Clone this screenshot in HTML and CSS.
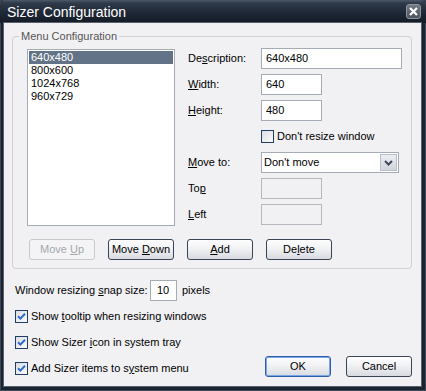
FILE: index.html
```html
<!DOCTYPE html>
<html lang="en">
<head>
    <meta charset="UTF-8">
    <title>Sizer Configuration</title>
    <link rel="stylesheet" href="styles.css">
</head>
<body>
<div class="window">
    <div class="titlebar">
        <span class="title">Sizer Configuration</span>
        <span class="close">
            <svg width="9" height="9" viewBox="0 0 9 9"><path d="M1 1L8 8M8 1L1 8" stroke="#fff" stroke-width="2.2"/></svg>
        </span>
    </div>
    <div class="client">
        <fieldset class="group">
            <legend>Menu Configuration</legend>
            <div class="groupBody">
                <ul class="listbox">
                    <li class="selected">640x480</li>
                    <li>800x600</li>
                    <li>1024x768</li>
                    <li>960x729</li>
                </ul>
                <div class="form">
                    <span>De<u>s</u>cription:</span>
                    <span class="edit wide">640x480</span>
                    <span><u>W</u>idth:</span>
                    <span class="edit">640</span>
                    <span><u>H</u>eight:</span>
                    <span class="edit">480</span>
                    <span></span>
                    <span class="check"><span class="box"></span><span>Don't resize window</span></span>
                    <span><u>M</u>ove to:</span>
                    <span class="combo">
                        <span class="comboText">Don't move</span>
                        <span class="comboArrow">
                            <svg width="9" height="6" viewBox="0 0 9 6"><path d="M1 1L4.5 4.5L8 1" fill="none" stroke="#3e4a5c" stroke-width="2"/></svg>
                        </span>
                    </span>
                    <span>To<u>p</u></span>
                    <span class="edit disabled"></span>
                    <span><u>L</u>eft</span>
                    <span class="edit disabled"></span>
                </div>
            </div>
            <div class="buttonRow">
                <span class="btn disabledBtn"><span>Move <u>U</u>p</span></span>
                <span class="btn"><span>Move <u>D</u>own</span></span>
                <span class="btn"><span><u>A</u>dd</span></span>
                <span class="btn"><span>De<u>l</u>ete</span></span>
            </div>
        </fieldset>
        <div class="bottom">
            <div class="options">
                <div class="snapRow">
                    <span class="snapLabel">Window resizing <u>s</u>nap size:</span>
                    <span class="edit snap">10</span>
                    <span class="pixels">pixels</span>
                </div>
                <span class="check"><span class="box on"><svg width="11" height="11" viewBox="0 0 11 11"><path d="M2 5.2L4.4 7.6L9 2.8" fill="none" stroke="#2c6bd0" stroke-width="2"/></svg></span><span>Show <u>t</u>ooltip when resizing windows</span></span>
                <span class="check"><span class="box on"><svg width="11" height="11" viewBox="0 0 11 11"><path d="M2 5.2L4.4 7.6L9 2.8" fill="none" stroke="#2c6bd0" stroke-width="2"/></svg></span><span>Show Sizer <u>i</u>con in system tray</span></span>
                <span class="check"><span class="box on"><svg width="11" height="11" viewBox="0 0 11 11"><path d="M2 5.2L4.4 7.6L9 2.8" fill="none" stroke="#2c6bd0" stroke-width="2"/></svg></span><span>Add Sizer items to s<u>y</u>stem menu</span></span>
            </div>
            <div class="dialogButtons">
                <span class="btn default"><span>OK</span></span>
                <span class="btn"><span>Cancel</span></span>
            </div>
        </div>
    </div>
</div>
</body>
</html>
```

FILE: styles.css
```css
body{
    margin: 0;
    font-family: "Liberation Sans", Arial, sans-serif;
    font-size: 11px;
    line-height: 13px;
    color: #000;
}
u{
    text-decoration: underline;
    text-underline-offset: 1px;
}
.window{
    width: 426px;
    height: 391px;
    display: flex;
    flex-direction: column;
    background: #1c2330;
    box-shadow: inset 0 0 0 1px #3d4756;
}
.titlebar{
    height: 23px;
    flex: none;
    display: flex;
    align-items: center;
    justify-content: space-between;
    padding: 0 5px 0 7px;
    background: linear-gradient(#4d5869 0, #2f3a4a 3px, #1f2836 55%, #141b26 100%);
    border-radius: 6px 6px 0 0;
}
.title{
    color: #fff;
    font-size: 14px;
    line-height: 16px;
    margin-top: 1px;
}
.close{
    width: 13px;
    height: 13px;
    border: 1px solid #8f969f;
    border-radius: 3px;
    background: linear-gradient(#737a84, #4d535c);
    display: flex;
    align-items: center;
    justify-content: center;
}
.client{
    flex: 1;
    margin: 0 5px 5px 4px;
    padding: 7px 9px 0 8px;
    background: #f1f1f4;
    box-shadow: 0 0 0 1px #56606e;
}
.group{
    margin: 0;
    padding: 5px 8px 8px 14px;
    border: 1px solid #d0d0d5;
    border-radius: 4px;
    min-width: 0;
}
.group legend{
    padding: 0 2px;
    margin-left: -8px;
    color: #555;
    line-height: 13px;
}
.groupBody{
    display: flex;
}
.listbox{
    flex: none;
    list-style: none;
    margin: 1px 0 0 0;
    padding: 1px;
    width: 144px;
    height: 173px;
    border: 1px solid #a5acb5;
    background: #fff;
}
.listbox li{
    padding-left: 2px;
    height: 13px;
}
.listbox .selected{
    background: #627387;
    color: #fff;
}
.form{
    flex: none;
    margin-left: 13px;
    display: grid;
    grid-template-columns: 73px auto;
    grid-auto-rows: 21px;
    row-gap: 5px;
    align-items: center;
    justify-items: start;
}
.edit{
    box-sizing: border-box;
    width: 61px;
    height: 21px;
    border: 1px solid #a5acb5;
    background: #fff;
    padding: 3px 4px;
}
.edit.wide{
    width: 141px;
}
.edit.disabled{
    background: #f1f1f4;
    border-color: #b4b7bd;
}
.check{
    display: flex;
    align-items: center;
}
.box{
    flex: none;
    box-sizing: border-box;
    width: 13px;
    height: 13px;
    border: 1px solid #1f3e66;
    background: linear-gradient(135deg, #dcdde3, #fbfbfc);
    margin-right: 3px;
    display: flex;
    align-items: center;
    justify-content: center;
}
.combo{
    box-sizing: border-box;
    width: 138px;
    height: 21px;
    border: 1px solid #a5acb5;
    background: #fff;
    display: flex;
    align-items: center;
}
.comboText{
    flex: 1;
    padding-left: 2px;
}
.comboArrow{
    box-sizing: border-box;
    width: 17px;
    height: 17px;
    margin-right: 1px;
    border: 1px solid #b9c0cb;
    background: linear-gradient(#eceef2, #d0d5dd);
    display: flex;
    align-items: center;
    justify-content: center;
}
.buttonRow{
    display: flex;
    gap: 13px;
    margin-top: 13px;
    padding-left: 2px;
}
.btn{
    box-sizing: border-box;
    width: 66px;
    height: 21px;
    border: 1px solid #3a4454;
    border-radius: 3px;
    background: linear-gradient(#fdfdfe, #f1f2f4 45%, #d7dae0);
    display: flex;
    align-items: center;
    justify-content: center;
}
.btn.disabledBtn{
    border-color: #c6c9ce;
    background: #f4f4f6;
    color: #a4a7ac;
}
.btn.default{
    border-color: #2e5fa8;
    box-shadow: inset 0 0 0 1px #79a6e6;
}
.bottom{
    display: flex;
    justify-content: space-between;
    margin-top: 11px;
    padding-left: 3px;
}
.options{
    display: grid;
    grid-auto-rows: 21px;
    row-gap: 5px;
    align-items: center;
}
.snapRow{
    display: flex;
    align-items: center;
}
.snapLabel{
    width: 135px;
}
.edit.snap{
    width: 27px;
    padding-left: 6px;
}
.pixels{
    margin-left: 5px;
}
.dialogButtons{
    display: flex;
    gap: 15px;
    align-self: flex-end;
    margin-bottom: 2px;
}
```
